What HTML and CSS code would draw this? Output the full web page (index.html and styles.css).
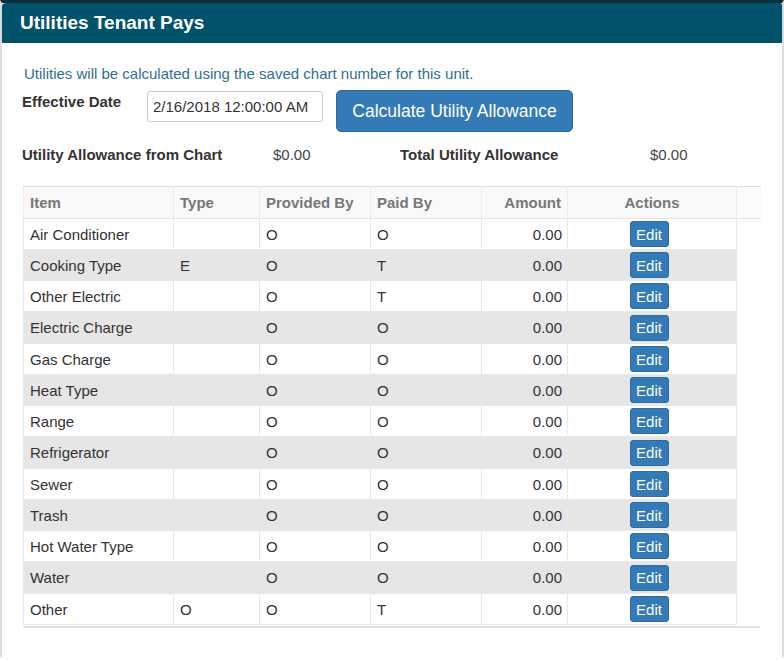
FILE: index.html
```html
<!DOCTYPE html>
<html>
<head>
<meta charset="utf-8">
<link rel="stylesheet" href="styles.css">
</head>
<body>
<div class="panel">
  <div class="panel-head">Utilities Tenant Pays</div>
  <div class="panel-body">
    <p class="info">Utilities will be calculated using the saved chart number for this unit.</p>
    <div class="date-row">
      <label class="lbl">Effective Date</label>
      <input class="date-input" type="text" value="2/16/2018 12:00:00 AM">
      <button class="btn-calc">Calculate Utility Allowance</button>
    </div>
    <div class="sum-row">
      <span class="lbl sum-lbl1">Utility Allowance from Chart</span>
      <span class="val sum-val1">$0.00</span>
      <span class="lbl sum-lbl2">Total Utility Allowance</span>
      <span class="val">$0.00</span>
    </div>
    <div class="grid">
      <table class="thead">
        <colgroup>
          <col class="c1"><col class="c2"><col class="c3"><col class="c4"><col class="c5"><col class="c6"><col class="cg">
        </colgroup>
        <tr>
          <th>Item</th>
          <th>Type</th>
          <th>Provided By</th>
          <th>Paid By</th>
          <th class="num">Amount</th>
          <th class="ctr">Actions</th>
          <th class="gutter"></th>
        </tr>
      </table>
      <table class="tbody">
        <colgroup>
          <col class="c1"><col class="c2"><col class="c3"><col class="c4"><col class="c5"><col class="c6">
        </colgroup>
        <tr><td>Air Conditioner</td><td></td><td>O</td><td>O</td><td class="num">0.00</td><td class="act"><button class="btn-edit">Edit</button></td></tr>
        <tr class="alt"><td>Cooking Type</td><td>E</td><td>O</td><td>T</td><td class="num">0.00</td><td class="act"><button class="btn-edit">Edit</button></td></tr>
        <tr><td>Other Electric</td><td></td><td>O</td><td>T</td><td class="num">0.00</td><td class="act"><button class="btn-edit">Edit</button></td></tr>
        <tr class="alt"><td>Electric Charge</td><td></td><td>O</td><td>O</td><td class="num">0.00</td><td class="act"><button class="btn-edit">Edit</button></td></tr>
        <tr><td>Gas Charge</td><td></td><td>O</td><td>O</td><td class="num">0.00</td><td class="act"><button class="btn-edit">Edit</button></td></tr>
        <tr class="alt"><td>Heat Type</td><td></td><td>O</td><td>O</td><td class="num">0.00</td><td class="act"><button class="btn-edit">Edit</button></td></tr>
        <tr><td>Range</td><td></td><td>O</td><td>O</td><td class="num">0.00</td><td class="act"><button class="btn-edit">Edit</button></td></tr>
        <tr class="alt"><td>Refrigerator</td><td></td><td>O</td><td>O</td><td class="num">0.00</td><td class="act"><button class="btn-edit">Edit</button></td></tr>
        <tr><td>Sewer</td><td></td><td>O</td><td>O</td><td class="num">0.00</td><td class="act"><button class="btn-edit">Edit</button></td></tr>
        <tr class="alt"><td>Trash</td><td></td><td>O</td><td>O</td><td class="num">0.00</td><td class="act"><button class="btn-edit">Edit</button></td></tr>
        <tr><td>Hot Water Type</td><td></td><td>O</td><td>O</td><td class="num">0.00</td><td class="act"><button class="btn-edit">Edit</button></td></tr>
        <tr class="alt"><td>Water</td><td></td><td>O</td><td>O</td><td class="num">0.00</td><td class="act"><button class="btn-edit">Edit</button></td></tr>
        <tr><td>Other</td><td>O</td><td>O</td><td>T</td><td class="num">0.00</td><td class="act"><button class="btn-edit">Edit</button></td></tr>
      </table>
      <div class="grid-foot"></div>
    </div>
  </div>
</div>
</body>
</html>
```

FILE: styles.css
```css
html, body {
  margin: 0;
  padding: 0;
  background: #fff;
}
body {
  font-family: "Liberation Sans", Arial, sans-serif;
  font-size: 15px;
  color: #333;
}
.panel {
  border-top: 3px solid #0c2c3a;
  border-left: 2px solid #dcdcdc;
  border-right: 2px solid #dcdcdc;
  min-height: 657px;
  box-sizing: border-box;
}
.panel-head {
  background: #01536b;
  color: #fff;
  font-weight: bold;
  font-size: 19px;
  height: 40px;
  line-height: 40px;
  padding-left: 18px;
  border-top-left-radius: 4px;
  border-top-right-radius: 2px;
}
.panel-body {
  padding: 21px 0 0 20px;
}
.info {
  margin: 0 0 0 2px;
  color: #31708f;
  line-height: 19px;
}
.date-row {
  display: flex;
  align-items: flex-start;
  margin-top: 7px;
}
.lbl {
  font-weight: bold;
  color: #333;
}
.date-row .lbl {
  width: 125px;
  line-height: 20px;
  padding-top: 2px;
}
.date-input {
  width: 176px;
  height: 31px;
  box-sizing: border-box;
  border: 1px solid #ccc;
  border-radius: 3px;
  font-family: "Liberation Sans", Arial, sans-serif;
  font-size: 15px;
  color: #333;
  padding: 0 5px;
  margin: 1px 0 0 0;
}
.btn-calc {
  margin-left: 13px;
  width: 237px;
  height: 42px;
  background: #337ab7;
  border: 1px solid #2e6da4;
  border-radius: 5px;
  color: #fff;
  font-family: "Liberation Sans", Arial, sans-serif;
  font-size: 17.5px;
  padding: 0;
}
.sum-row {
  display: flex;
  align-items: center;
  margin-top: 13px;
  line-height: 20px;
}
.sum-lbl1 { width: 251px; }
.sum-val1 { width: 127px; }
.sum-lbl2 { width: 250px; }
.val { color: #444; }
.grid {
  margin-top: 21px;
  margin-left: 1px;
  width: 737px;
}
table {
  border-collapse: collapse;
  table-layout: fixed;
}
col.c1 { width: 150px; }
col.c2 { width: 86px; }
col.c3 { width: 111px; }
col.c4 { width: 111px; }
col.c5 { width: 86px; }
col.c6 { width: 169px; }
col.cg { width: 24px; }
.thead {
  width: 737px;
  background: #f9f9f9;
}
.thead th {
  height: 31px;
  padding: 0 6px;
  text-align: left;
  color: #777;
  font-weight: bold;
  border-top: 1px solid #ddd;
  border-left: 1px solid #ececec;
  border-right: 1px solid #ececec;
  border-bottom: 1px solid #e4e4e4;
}
.thead th.gutter {
  border-right: none;
  background: #fbfbfb;
}
.tbody {
  width: 713px;
}
.tbody td {
  height: 30px;
  padding: 0 6px;
  border: 1px solid #e8e8e8;
  background: #fff;
  white-space: nowrap;
}
.tbody tr:nth-child(4n) td { height: 31px; }
.tbody tr:first-child td { border-top: none; }
.tbody tr.alt td {
  background: #e6e6e6;
}
.num { text-align: right !important; }
.ctr { text-align: center !important; }
.tbody td.num { padding-right: 5px; }
.tbody td.act {
  text-align: center;
  padding: 0 11px 0 5px;
}
.btn-edit {
  background: #337ab7;
  border: 1px solid #2e6da4;
  border-radius: 3px;
  color: #fff;
  font-family: "Liberation Sans", Arial, sans-serif;
  font-size: 15px;
  height: 26px;
  width: 39px;
  padding: 0;
  vertical-align: middle;
}
.grid-foot {
  height: 2px;
  margin-top: 1px;
  background: #e2e2e2;
  width: 737px;
}
```
